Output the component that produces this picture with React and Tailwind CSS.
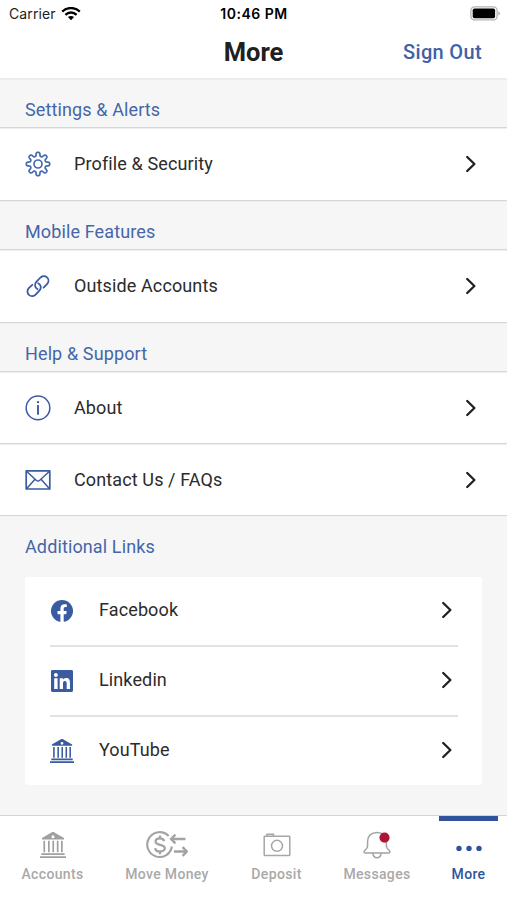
import React from "react";

const BLUE = "#3a5ba0";

// Closed outline of an eight-toothed cog with softly rounded teeth.
const cogPath = (() => {
  const pts = [];
  for (let i = 0; i < 240; i++) {
    const a = (i / 240) * Math.PI * 2;
    const r = 9.8 + 1.95 * Math.tanh(2 * Math.cos(8 * a));
    pts.push(`${(13 + r * Math.sin(a)).toFixed(2)} ${(13 - r * Math.cos(a)).toFixed(2)}`);
  }
  return `M${pts.join("L")}Z`;
})();

const Gear = () => (
  <svg width="26" height="26" viewBox="0 0 26 26" fill="none" stroke="#466aae" strokeWidth="1.7" strokeLinejoin="round">
    <path d={cogPath} />
    <circle cx="13" cy="13" r="4" />
  </svg>
);

const Chain = () => (
  <svg width="26" height="26" viewBox="0 0 26 26" fill="none" stroke={BLUE} strokeWidth="1.8" strokeLinecap="round">
    <path d="M12.6 16.2 C9.6 14.6 9.2 11.2 11.3 8.9 L15 5 C17 2.8 20 2.7 22 4.4 C24 6.3 23.9 9.2 22 11.2 L18.6 14.6" />
    <path d="M13.2 10.2 C16.2 11.8 16.6 15 14.6 17.3 L10.9 21.3 C8.9 23.4 5.9 23.6 3.9 21.8 C2 20 2 17 3.8 15.1 L7.3 11.8" />
  </svg>
);

const Info = () => (
  <svg width="26" height="26" viewBox="0 0 26 26" fill="none" stroke={BLUE}>
    <circle cx="13" cy="12.9" r="11.8" strokeWidth="1.5" />
    <path d="M13 10V19.8" strokeWidth="1.9" />
    <circle cx="13" cy="7.1" r="1.2" fill={BLUE} stroke="none" />
  </svg>
);

const Mail = () => (
  <svg width="26" height="26" viewBox="0 0 26 26" fill="none" stroke={BLUE} strokeWidth="1.5" strokeLinejoin="round">
    <rect x="1.2" y="3.8" width="23.6" height="18.2" strokeWidth="1.7" />
    <path d="M1.5 4.2L11.2 13.2Q13 14.8 14.8 13.2L24.5 4.2M1.5 21.7L10 12.3M24.5 21.7L16 12.3" />
  </svg>
);

const Facebook = () => (
  <svg width="24" height="24" viewBox="0 0 24 24">
    <circle cx="12" cy="12" r="11" fill={BLUE} />
    <path fill="#fff" d="M10.4 23.2V15.2H7.5V12H10.4V9.5C10.4 6.7 12 5.2 14.5 5.2C15.7 5.2 16.8 5.4 16.8 5.4V8.1H15.4C14.1 8.1 13.7 8.9 13.7 9.8V12H16.7L16.2 15.2H13.7V23.2Z" />
  </svg>
);

const Linkedin = () => (
  <svg width="24" height="24" viewBox="0 0 24 24">
    <rect x="1" y="1" width="22" height="22" rx="1.4" fill={BLUE} />
    <g fill="#fff">
      <circle cx="5.9" cy="6" r="1.95" />
      <path d="M4.2 9.3H7.6V19.9H4.2ZM9.7 9.3H12.9V10.8C13.5 9.8 14.6 9 16.1 9C19.3 9 20 11.1 20 14V19.9H16.7V14.7C16.7 13.4 16.6 11.9 14.9 11.9C13.2 11.9 13 13.3 13 14.6V19.9H9.7Z" />
    </g>
  </svg>
);

const Bank = ({ color, size }) => (
  <svg width={size} height={size} viewBox="0 0 26 26" fill={color}>
    <path fillRule="evenodd" d="M13 -0.4L24 6V7.4H2V6ZM13 3.2A1.5 1.5 0 1 0 13 6.2A1.5 1.5 0 1 0 13 3.2Z" />
    <path d="M3.4 8.8H5.1V20.3H3.4ZM8 8.8H9.7V20.3H8ZM12.4 8.8H14.1V20.3H12.4ZM16.8 8.8H18.5V20.3H16.8ZM21 8.8H22.7V20.3H21ZM1.4 21.2H24.6V23H1.4ZM0 24.2H26V26H0Z" />
  </svg>
);

const MoveMoney = () => (
  <svg width="42" height="28" viewBox="0 0 42 28" fill="none" stroke="#a3a3a3" strokeWidth="2.1">
    <path d="M22.6 5A12.4 12.4 0 1 0 25.9 15.5" />
    <path strokeWidth="2.3" d="M18 10.2C17.7 8.2 16.1 7.4 14 7.4C11.6 7.4 9.6 8.6 9.6 10.5C9.6 15.3 18.8 12.3 18.8 17.2C18.8 19.3 16.5 20.5 14 20.5C11.4 20.5 9.5 19.4 9.1 17.2M14 4.6V8M14 20V23.2" />
    <path strokeWidth="2.4" d="M39.5 8H25.5M29.4 3.7L25.1 8L29.4 12.3M28 20.5H40.5M36.6 16.2L40.9 20.5L36.6 24.8" />
  </svg>
);

const Camera = () => (
  <svg width="28" height="24" viewBox="0 0 28 24" fill="none" stroke="#a6a6a6" strokeWidth="1.5">
    <rect x="1.2" y="3.2" width="25.6" height="19.2" rx="0.6" />
    <path d="M4 3V1.2H10.5V3" />
    <circle cx="14" cy="12.8" r="5.5" />
  </svg>
);

const Bell = () => (
  <svg width="28" height="28" viewBox="0 0 28 28" fill="none" stroke="#a3a3a3" strokeWidth="1.5">
    <path d="M14 1.4C8.4 1.4 4.6 5 4.6 10V14.8C4.6 16.9 4 17.7 2.4 18.8C0.3 20.2 0.8 22.1 3 22.1H25C27.2 22.1 27.7 20.2 25.6 18.8C24 17.7 23.4 16.9 23.4 14.8V10C23.4 5 19.6 1.4 14 1.4Z" />
    <path d="M9.8 22.2C10.2 25 11.8 26.8 14 26.8S17.8 25 18.2 22.2" />
    <circle cx="21.5" cy="6.6" r="5.1" fill="#ad1737" stroke="none" />
  </svg>
);

const Dots = () => (
  <svg width="26" height="8" viewBox="0 0 26 8" fill="#30529b">
    <circle cx="3" cy="3.4" r="2.7" />
    <circle cx="13" cy="3.4" r="2.7" />
    <circle cx="23" cy="3.4" r="2.7" />
  </svg>
);

const Chevron = () => (
  <svg width="12" height="18" viewBox="0 0 12 18" fill="none" stroke="#202020" strokeWidth="2.3" strokeLinecap="round" strokeLinejoin="round">
    <path d="M2.2 2L9.4 9L2.2 16" />
  </svg>
);

const Wifi = () => (
  <svg width="20" height="14" viewBox="0 0 20 14" fill="none" stroke="#000" strokeWidth="2.3">
    <path d="M1.2 4.6C6.2 -0.2 13.8 -0.2 18.8 4.6M4.4 7.8C7.6 4.7 12.4 4.7 15.6 7.8" />
    <path d="M10 13.2L6.9 10.1C8.7 8.5 11.3 8.5 13.1 10.1Z" fill="#000" stroke="none" />
  </svg>
);

const Battery = () => (
  <svg width="31" height="15" viewBox="0 0 31 15">
    <rect x="0.9" y="0.9" width="26.2" height="13" rx="3.6" fill="#fff" stroke="#b4b4b4" strokeWidth="1.3" />
    <rect x="2.7" y="2.6" width="22.4" height="9.6" rx="1.7" />
    <path d="M28.4 5.2C30.4 6 30.4 8.8 28.4 9.6Z" fill="#a5a5a5" />
  </svg>
);

const SectionTitle = ({ children }) => (
  <h2 className="flex h-[49px] items-end border-t border-b border-t-[#eeeeee] border-b-[#d6d6d6] px-[25px] pb-[6.5px] text-[18px] leading-[22px] tracking-[0.12px] text-[#4466a8]">
    {children}
  </h2>
);

const Row = ({ icon, label, last }) => (
  <div
    className={`flex items-center border-t border-b border-t-[#efefef] border-b-[#d6d6d6] bg-white pr-[30px] pl-[25px] ${
      last ? "h-[73px] pb-px" : "h-[72px]"
    }`}
  >
    <span className="w-[49px]">{icon}</span>
    <span className="grow text-[18px] leading-[22px] tracking-[0.12px]">{label}</span>
    <Chevron />
  </div>
);

const LinkRow = ({ icon, label, line }) => (
  <div className={`flex items-center pr-[5px] ${line ? "h-[70px] border-b-2 border-[#e2e2e2] pb-[2px]" : "h-[68px] pb-[3px]"}`}>
    <span className="w-[49px] pt-[2px]">{icon}</span>
    <span className="grow text-[18px] leading-[22px] tracking-[0.12px]">{label}</span>
    <Chevron />
  </div>
);

const Tab = ({ icon, label, width, active }) => (
  <div className={`flex flex-col items-center ${width} ${active ? "text-[#30529b]" : "text-[#a9a9a9]"}`}>
    <div className={`h-[5px] w-[59px] ${active ? "bg-[#30529b]" : ""}`} />
    <div className="mt-[9px] flex h-[30px] items-center">{icon}</div>
    <span className="mt-[5px] text-[14px] leading-[18px] font-medium tracking-[0.35px] whitespace-nowrap">{label}</span>
  </div>
);

export default function App() {
  return (
    <main className="flex h-[900px] w-[507px] flex-col overflow-hidden bg-[#f6f6f6] font-['Roboto',sans-serif] text-[#2b2b2b]">
      <header className="h-[79px] border-b border-[#ebebeb] bg-white">
        <div className="grid h-[27px] grid-cols-3 items-center pr-[6px] pl-[9px] font-['Inter',sans-serif] text-black">
          <div className="flex items-center gap-[5px] text-[14px] leading-[18px] tracking-[0.1px] text-[#222]">
            <span>Carrier</span>
            <Wifi />
          </div>
          <span className="pr-[2px] text-center text-[14px] leading-[18px] font-semibold tracking-[0.5px]">10:46 PM</span>
          <div className="flex justify-end">
            <Battery />
          </div>
        </div>
        <div className="grid h-[50px] grid-cols-3 items-center px-[25px]">
          <h1 className="col-start-2 text-center text-[25.5px] leading-[30px] font-bold text-[#202020]">More</h1>
          <span className="text-right text-[20px] leading-[26px] font-medium tracking-[0.35px] text-[#3f62a6]">Sign Out</span>
        </div>
      </header>

      <SectionTitle>Settings &amp; Alerts</SectionTitle>
      <Row icon={<Gear />} label="Profile & Security" last />
      <SectionTitle>Mobile Features</SectionTitle>
      <Row icon={<Chain />} label="Outside Accounts" last />
      <SectionTitle>Help &amp; Support</SectionTitle>
      <Row icon={<Info />} label="About" />
      <Row icon={<Mail />} label="Contact Us / FAQs" />

      <section className="grow px-[25px] pt-[20px]">
        <h2 className="text-[18px] leading-[22px] tracking-[0.12px] text-[#4466a8]">Additional Links</h2>
        <div className="mt-[19px] h-[208px] rounded-[3px] bg-white pr-[24px] pl-[25px]">
          <LinkRow icon={<Facebook />} label="Facebook" line />
          <LinkRow icon={<Linkedin />} label="Linkedin" line />
          <LinkRow icon={<Bank color={BLUE} size={24} />} label="YouTube" />
        </div>
      </section>

      <nav className="flex h-[85px] shrink-0 border-t border-[#d4d4d4] bg-white">
        <Tab width="w-[105px]" icon={<Bank color="#a0a0a0" size={26} />} label="Accounts" />
        <Tab width="w-[124px]" icon={<MoveMoney />} label="Move Money" />
        <Tab width="w-[95px]" icon={<Camera />} label="Deposit" />
        <Tab width="w-[106px]" icon={<Bell />} label="Messages" />
        <Tab width="w-[77px]" icon={<div className="pt-[7px]"><Dots /></div>} label="More" active />
      </nav>
    </main>
  );
}
